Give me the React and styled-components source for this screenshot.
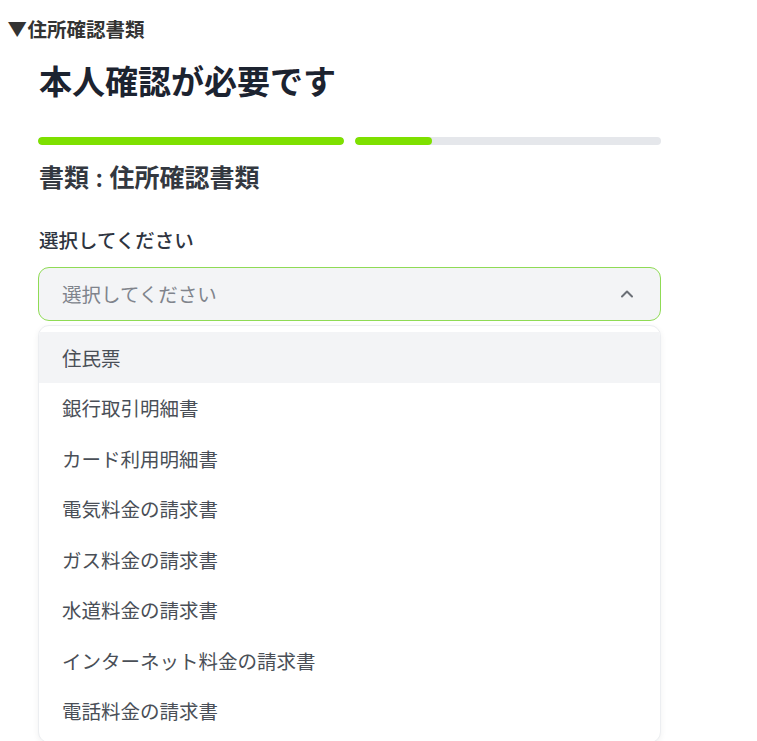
import React from "react";
import styled, { createGlobalStyle } from "styled-components";

const Global = createGlobalStyle`
  html, body { margin: 0; padding: 0; background: #ffffff; }
  body { font-family: "Inter", "Noto Sans CJK JP", sans-serif; }
`;

const Page = styled.div`
  padding: 18px 0 0 0;
`;

const Summary = styled.div`
  padding-left: 7px;
  font-size: 19.5px;
  line-height: 24px;
  font-weight: 700;
  color: #333333;
`;

const Content = styled.div`
  width: 623px;
  margin-left: 38px;
  display: flex;
  flex-direction: column;
`;

const Title = styled.h1`
  margin: 20px 0 0 1px;
  font-size: 33px;
  line-height: 40px;
  font-weight: 700;
  color: #1c2330;
`;

const Steps = styled.div`
  margin-top: 35px;
  display: grid;
  grid-template-columns: 1fr 1fr;
  gap: 11px;
`;

const Track = styled.div`
  height: 8px;
  border-radius: 4px;
  background: #e5e7eb;
  overflow: hidden;
`;

const Fill = styled.div`
  height: 100%;
  border-radius: 4px;
  background: #7ee000;
`;

const SubTitle = styled.h2`
  margin: 18px 0 0 1px;
  font-size: 25px;
  line-height: 30px;
  font-weight: 600;
  color: #333840;
`;

const Label = styled.div`
  margin: 36px 0 0 1px;
  font-size: 19.5px;
  line-height: 24px;
  font-weight: 500;
  color: #2e3440;
`;

const Select = styled.div`
  margin-top: 14px;
  box-sizing: border-box;
  height: 54px;
  border: 1.5px solid #8fdb55;
  border-radius: 11px;
  background: #f3f4f6;
  display: flex;
  align-items: center;
  justify-content: space-between;
  padding: 0 26px 2px 23px;
`;

const Placeholder = styled.span`
  font-size: 19.5px;
  color: #80848c;
`;

const Menu = styled.ul`
  list-style: none;
  margin: 4px 0 0 0;
  padding: 6px 0 6px 0;
  border: 1px solid #eceef1;
  border-radius: 11px;
  background: #ffffff;
  box-shadow: 0 2px 6px rgba(0, 0, 0, 0.06);
  overflow: hidden;
`;

const Item = styled.li`
  height: 50.5px;
  display: flex;
  align-items: center;
  padding-left: 23px;
  font-size: 19.5px;
  color: #4a4f57;
  background: ${(p) => (p.$active ? "#f3f4f6" : "transparent")};
`;

const items = [
  "住民票",
  "銀行取引明細書",
  "カード利用明細書",
  "電気料金の請求書",
  "ガス料金の請求書",
  "水道料金の請求書",
  "インターネット料金の請求書",
  "電話料金の請求書",
];

export default function App() {
  return (
    <>
      <Global />
      <Page>
        <Summary>▼住所確認書類</Summary>
        <Content>
          <Title>本人確認が必要です</Title>
          <Steps>
            <Track>
              <Fill style={{ width: "100%" }} />
            </Track>
            <Track>
              <Fill style={{ width: "25%" }} />
            </Track>
          </Steps>
          <SubTitle>書類 : 住所確認書類</SubTitle>
          <Label>選択してください</Label>
          <Select>
            <Placeholder>選択してください</Placeholder>
            <svg width="14" height="9" viewBox="0 0 14 9" fill="none">
              <path d="M2 7.5L7 2.5L12 7.5" stroke="#6b6f76" strokeWidth="2" strokeLinecap="round" strokeLinejoin="round" />
            </svg>
          </Select>
          <Menu>
            {items.map((t, i) => (
              <Item key={t} $active={i === 0}>
                {t}
              </Item>
            ))}
          </Menu>
        </Content>
      </Page>
    </>
  );
}
